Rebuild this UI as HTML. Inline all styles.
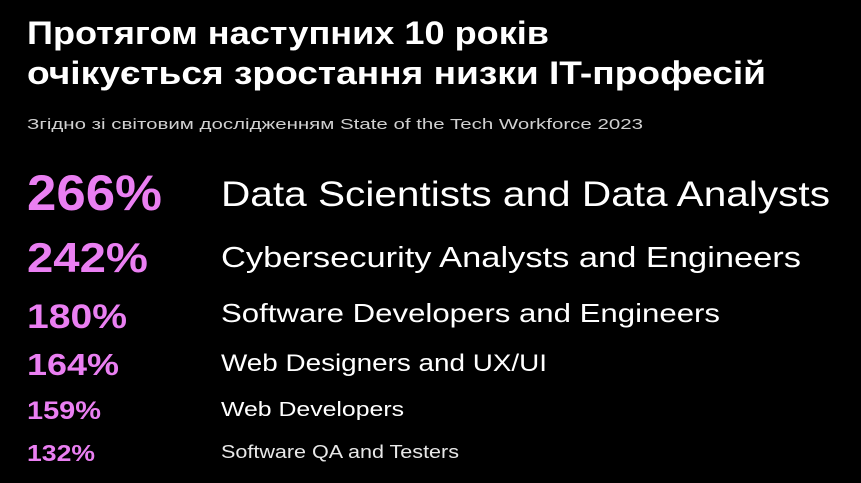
<!DOCTYPE html>
<html><head><meta charset="utf-8"><style>
html,body{margin:0;padding:0;background:#000;width:861px;height:483px;overflow:hidden}
svg{display:block}
</style></head><body>
<svg width="861" height="483" xmlns="http://www.w3.org/2000/svg" font-family="Liberation Sans, sans-serif">
<rect width="861" height="483" fill="#000"/>
<g fill="#fff" font-weight="bold" font-size="32">
<text x="27" y="44" textLength="522" lengthAdjust="spacingAndGlyphs">Протягом наступних 10 років</text>
<text x="27" y="84" textLength="739" lengthAdjust="spacingAndGlyphs">очікується зростання низки IT-професій</text>
</g>
<text x="27" y="129" fill="#d0d0d0" font-size="15" textLength="616" lengthAdjust="spacingAndGlyphs">Згідно зі світовим дослідженням State of the Tech Workforce 2023</text>
<g fill="#ea7ff2" font-weight="bold">
<text x="27" y="210" font-size="50" textLength="135" lengthAdjust="spacingAndGlyphs">266%</text>
<text x="27" y="272" font-size="42" textLength="121" lengthAdjust="spacingAndGlyphs">242%</text>
<text x="27" y="328" font-size="34" textLength="100" lengthAdjust="spacingAndGlyphs">180%</text>
<text x="27" y="375" font-size="31" textLength="92" lengthAdjust="spacingAndGlyphs">164%</text>
<text x="27" y="419" font-size="25" textLength="74" lengthAdjust="spacingAndGlyphs">159%</text>
<text x="27" y="461" font-size="23" textLength="68" lengthAdjust="spacingAndGlyphs">132%</text>
</g>
<g fill="#fff">
<text x="221" y="206" font-size="35" textLength="609" lengthAdjust="spacingAndGlyphs">Data Scientists and Data Analysts</text>
<text x="221" y="267" font-size="29" textLength="580" lengthAdjust="spacingAndGlyphs">Cybersecurity Analysts and Engineers</text>
<text x="221" y="322" font-size="26" textLength="499" lengthAdjust="spacingAndGlyphs">Software Developers and Engineers</text>
<text x="221" y="371" font-size="24" textLength="326" lengthAdjust="spacingAndGlyphs">Web Designers and UX/UI</text>
<text x="221" y="416" font-size="20" textLength="183" lengthAdjust="spacingAndGlyphs">Web Developers</text>
<text x="221" y="458" font-size="18" fill="#e8e8e8" textLength="238" lengthAdjust="spacingAndGlyphs">Software QA and Testers</text>
</g>
</svg>
</body></html>
